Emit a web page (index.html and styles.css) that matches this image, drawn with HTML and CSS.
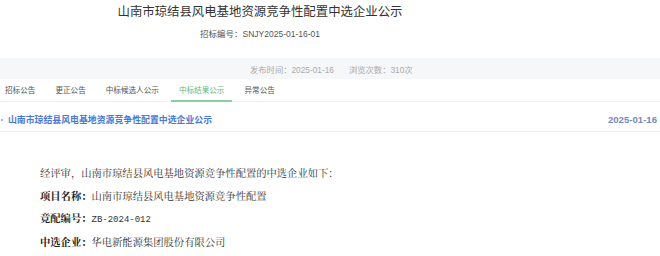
FILE: index.html
```html
<!DOCTYPE html>
<html lang="zh-CN">
<head>
<meta charset="utf-8">
<title>中选企业公示</title>
<link rel="stylesheet" href="styles.css">
</head>
<body>
<header class="head">
  <h1 class="title">山南市琼结县风电基地资源竞争性配置中选企业公示</h1>
  <p class="code">招标编号：<span class="latin">SNJY2025-01-16-01</span></p>
</header>
<div class="meta">
  <span>发布时间：<span class="latin">2025-01-16</span></span>
  <span>浏览次数：<span class="latin">310</span>次</span>
</div>
<nav class="tabs">
  <a class="tab">招标公告</a>
  <a class="tab">更正公告</a>
  <a class="tab">中标候选人公示</a>
  <a class="tab active">中标结果公示</a>
  <a class="tab">异常公告</a>
</nav>
<ul class="list">
  <li class="item">
    <span class="dot"></span>
    <a class="item-title">山南市琼结县风电基地资源竞争性配置中选企业公示</a>
    <span class="item-date">2025-01-16</span>
  </li>
</ul>
<section class="content">
  <p>经评审，山南市琼结县风电基地资源竞争性配置的中选企业如下：</p>
  <p><b>项目名称：</b>山南市琼结县风电基地资源竞争性配置</p>
  <p><b>竞配编号：</b><span class="mono">ZB-2024-012</span></p>
  <p><b>中选企业：</b>华电新能源集团股份有限公司</p>
</section>
</body>
</html>
```
FILE: styles.css
```css
* { box-sizing: border-box; }
body {
  margin: 0;
  background: #fff;
  font-family: "Liberation Sans", "Noto Sans CJK SC", sans-serif;
  color: #333;
}
.latin { font-family: "Liberation Sans", Arial, sans-serif; }
.head {
  width: 520px;
  height: 58px;
  text-align: center;
  padding-top: 2px;
}
.title {
  margin: 0;
  font-size: 12.4px;
  line-height: 18px;
  font-weight: 400;
  color: #333;
  font-family: "Noto Sans CJK SC", sans-serif;
}
.code {
  margin: 7px 0 0;
  font-size: 8.5px;
  line-height: 14px;
  color: #555;
}
.meta {
  height: 21px;
  background: #f6f7f9;
  display: flex;
  align-items: center;
  gap: 15px;
  padding-left: 250px;
  font-size: 8.3px;
  color: #aaa;
}
.tabs {
  display: flex;
  height: 23px;
  border-bottom: 1px solid #eef0f2;
  font-size: 7.6px;
}
.tab {
  display: flex;
  align-items: center;
  padding: 0 10px;
  color: #555;
  border-bottom: 2px solid transparent;
  margin-bottom: -1px;
}
.tab:first-child { padding-left: 5px; }
.tab.active {
  color: #62b881;
  border-bottom-color: #8ccfa3;
  padding: 0 8px;
  margin: 0 2px -1px;
}
.list {
  list-style: none;
  margin: 6px 0 0;
  padding: 0;
}
.item {
  display: flex;
  align-items: center;
  height: 24px;
  border-bottom: 1px solid #eef0f2;
  padding: 0 3px 0 1px;
}
.dot {
  width: 2px;
  height: 2px;
  border-radius: 50%;
  background: #8aa0d0;
  margin-right: 5px;
}
.item-title {
  font-size: 8.9px;
  font-weight: 700;
  color: #4a78d6;
  font-family: "Noto Sans CJK SC", sans-serif;
}
.item-date {
  margin-left: auto;
  font-size: 9.6px;
  font-weight: 700;
  color: #7389c2;
}
.content {
  padding: 31px 0 0 40px;
  font-family: "Liberation Serif", "Noto Serif CJK SC", "Noto Sans CJK SC", serif;
  font-size: 10.3px;
  color: #333;
}
.content p {
  margin: 0;
  line-height: 22.6px;
}
.content b { color: #222; font-weight: 700; }
.mono { font-family: "Liberation Mono", monospace; font-size: 9px; }
```
